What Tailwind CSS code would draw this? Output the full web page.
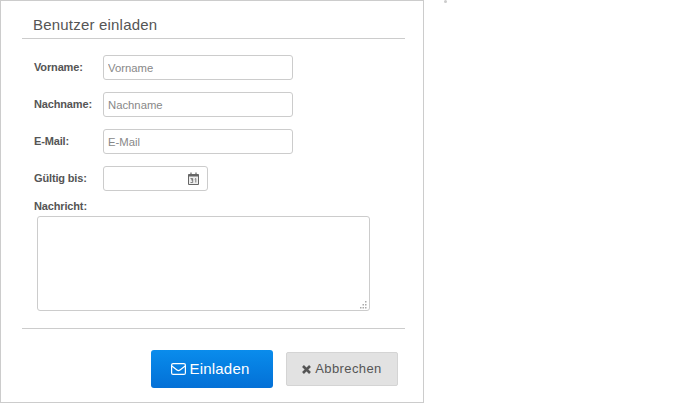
<!DOCTYPE html>
<html lang="de">
<head>
    <meta charset="UTF-8">
    <title>Benutzer einladen</title>
    <script src="https://cdn.jsdelivr.net/npm/@tailwindcss/browser@4"></script>
</head>
<body class="bg-white font-['Liberation_Sans',Arial,sans-serif] text-[#555]">
    <div class="relative w-[680px] h-[403px] overflow-hidden">
        <div class="absolute left-[444px] top-0 w-[3px] h-[3px] rounded-full bg-[#ccc]"></div>

        <div class="w-[424px] h-[403px] border border-[#ccc] pl-[21px] pr-[18px]">
            <h2 class="h-[38px] pl-[11px] pt-[14px] text-[15px] leading-[20px] tracking-[0.2px] text-[#555] font-normal border-b border-[#ccc]">Benutzer einladen</h2>

            <div class="mt-[16px] flex flex-col gap-[12px] pl-[12px]">
                <div class="flex items-center">
                    <label class="w-[69px] text-[11px] tracking-[-0.15px] font-bold">Vorname:</label>
                    <input type="text" placeholder="Vorname" class="w-[190px] h-[25px] px-[4px] border border-[#ccc] rounded-[3px] text-[11.3px] placeholder:text-[#888]">
                </div>
                <div class="flex items-center">
                    <label class="w-[69px] text-[11px] tracking-[-0.15px] font-bold">Nachname:</label>
                    <input type="text" placeholder="Nachname" class="w-[190px] h-[25px] px-[4px] border border-[#ccc] rounded-[3px] text-[11.3px] placeholder:text-[#888]">
                </div>
                <div class="flex items-center">
                    <label class="w-[69px] text-[11px] tracking-[-0.15px] font-bold">E-Mail:</label>
                    <input type="text" placeholder="E-Mail" class="w-[190px] h-[25px] px-[4px] border border-[#ccc] rounded-[3px] text-[11.3px] placeholder:text-[#888]">
                </div>
                <div class="flex items-center">
                    <label class="w-[69px] text-[11px] tracking-[-0.15px] font-bold">Gültig bis:</label>
                    <div class="w-[105px] h-[25px] pr-[8px] border border-[#ccc] rounded-[3px] flex items-center justify-end">
                        <svg width="11" height="13" viewBox="0 0 11 13" class="text-[#666]">
                            <path d="M.5 2.5h10v10H.5z" fill="#eee" stroke="currentColor"/>
                            <path d="M.5 2.5h10v2H.5z" fill="currentColor"/>
                            <path d="M3 .5v3M8 .5v3" stroke="currentColor" stroke-width="1.2"/>
                            <path d="M2.5 6.5h2.2v1.3H3.4h1.3v2.7H2.5M6.8 7.3l1-.8v4" fill="none" stroke="currentColor" stroke-width=".8"/>
                        </svg>
                    </div>
                </div>
            </div>

            <div class="mt-[8px] pl-[12px]">
                <label class="block text-[11px] tracking-[-0.15px] leading-[14px] font-bold">Nachricht:</label>
                <div class="relative mt-[3px] ml-[3px] w-[333px] h-[95px]">
                    <textarea class="block w-full h-full resize-none border border-[#ccc] rounded-[3px]"></textarea>
                    <svg width="8" height="8" viewBox="0 0 8 8" fill="#aaa" class="absolute right-[2px] bottom-[2px]">
                        <path d="M5 0h1.500v1.500H5zM2.500 3H4v1.500H2.500zM5 3h1.500v1.500H5zM0 6h1.500v1.500H0zM2.500 6H4v1.500H2.500zM5 6h1.500v1.500H5z"/>
                    </svg>
                </div>
            </div>

            <div class="mt-[17px] border-t border-[#ccc] pt-[21px] flex items-center">
                <button class="ml-[129px] w-[122px] h-[38px] pr-[4px] rounded-[3px] bg-gradient-to-b from-[#0a8cec] to-[#0470d6] text-white text-[15px] tracking-[0.2px] flex items-center justify-center gap-[4px]">
                    <svg width="15" height="12" viewBox="0 0 15 12" fill="none" stroke="currentColor" stroke-width="1.2">
                        <rect x=".6" y=".6" width="13.8" height="10.8" rx="1.5"/>
                        <path d="M.8 3l5.2 4a2.4 2.4 0 0 0 3 0l5.2-4"/>
                    </svg>
                    Einladen
                </button>
                <button class="ml-[13px] w-[112px] h-[34px] rounded-[2px] border border-[#d4d4d4] bg-[#e2e2e2] text-[#555] text-[13px] tracking-[0.4px] flex items-center justify-center gap-[4px]">
                    <svg width="9" height="9" viewBox="0 0 9 9" stroke="currentColor" stroke-width="2.6">
                        <path d="M1 1l7 7M8 1L1 8"/>
                    </svg>
                    Abbrechen
                </button>
            </div>
        </div>
    </div>
</body>
</html>
